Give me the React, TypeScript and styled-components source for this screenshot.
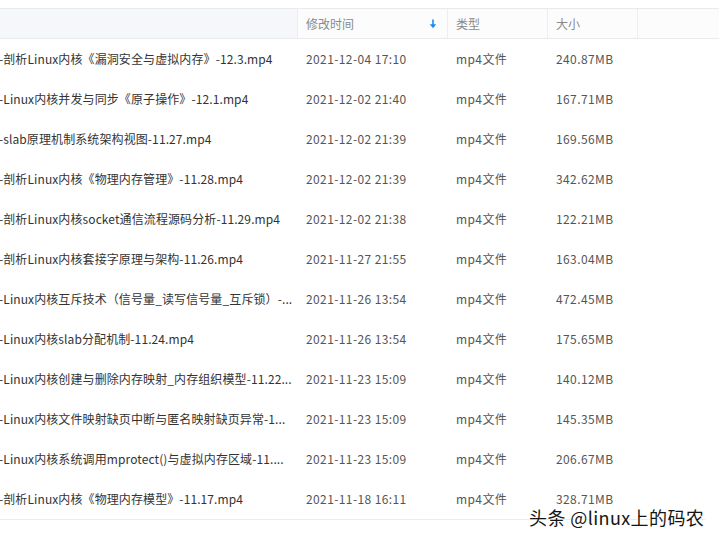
import React from 'react'
import styled, { createGlobalStyle } from 'styled-components'

const GlobalStyle = createGlobalStyle`
    html, body {
        margin: 0;
        padding: 0;
        background: #fff;
    }
    body {
        font-family: "Noto Sans CJK SC", "Noto Sans", sans-serif;
    }
`

interface FileRow {
    name: string
    time: string
    size: string
}

// names are kept as the list shows them (already cut with "...")
const files: FileRow[] = [
    { name: '-剖析Linux内核《漏洞安全与虚拟内存》-12.3.mp4', time: '2021-12-04 17:10', size: '240.87MB' },
    { name: '-Linux内核并发与同步《原子操作》-12.1.mp4', time: '2021-12-02 21:40', size: '167.71MB' },
    { name: '-slab原理机制系统架构视图-11.27.mp4', time: '2021-12-02 21:39', size: '169.56MB' },
    { name: '-剖析Linux内核《物理内存管理》-11.28.mp4', time: '2021-12-02 21:39', size: '342.62MB' },
    { name: '-剖析Linux内核socket通信流程源码分析-11.29.mp4', time: '2021-12-02 21:38', size: '122.21MB' },
    { name: '-剖析Linux内核套接字原理与架构-11.26.mp4', time: '2021-11-27 21:55', size: '163.04MB' },
    { name: '-Linux内核互斥技术（信号量_读写信号量_互斥锁）-...', time: '2021-11-26 13:54', size: '472.45MB' },
    { name: '-Linux内核slab分配机制-11.24.mp4', time: '2021-11-26 13:54', size: '175.65MB' },
    { name: '-Linux内核创建与删除内存映射_内存组织模型-11.22...', time: '2021-11-23 15:09', size: '140.12MB' },
    { name: '-Linux内核文件映射缺页中断与匿名映射缺页异常-1...', time: '2021-11-23 15:09', size: '145.35MB' },
    { name: '-Linux内核系统调用mprotect()与虚拟内存区域-11....', time: '2021-11-23 15:09', size: '206.67MB' },
    { name: '-剖析Linux内核《物理内存模型》-11.17.mp4', time: '2021-11-18 16:11', size: '328.71MB' },
]

export default function App() {
    return (
        <Page>
            <GlobalStyle />
            <Table>
                <HeaderRow>
                    <HeadCell first />
                    <HeadCell>
                        修改时间
                        <SortArrow viewBox="0 0 8 10">
                            <path d="M4 0.5 V8" stroke="#1a8cf0" strokeWidth="1.6" />
                            <path d="M0.8 5.2 L4 9.2 L7.2 5.2 Z" fill="#1a8cf0" />
                        </SortArrow>
                    </HeadCell>
                    <HeadCell>类型</HeadCell>
                    <HeadCell>大小</HeadCell>
                    <HeadCell />
                </HeaderRow>
                {files.map((f) => (
                    <Row key={f.name}>
                        <NameCell>{f.name}</NameCell>
                        <Cell>{f.time}</Cell>
                        <Cell>mp4文件</Cell>
                        <Cell>{f.size}</Cell>
                        <Cell />
                    </Row>
                ))}
            </Table>
            <Watermark>头条 @linux上的码农</Watermark>
        </Page>
    )
}

const Page = styled.div`
    position: relative;
    width: 719px;
    height: 543px;
    padding-top: 8px;
    box-sizing: border-box;
    overflow: hidden;
`

const Table = styled.div`
    width: 705px;
    border-bottom: 1px solid #ececf0;
`

const columns = '297px 150px 100px 90px 1fr'

const HeaderRow = styled.div`
    display: grid;
    grid-template-columns: ${columns};
    height: 29px;
    border-top: 1px solid #e9eaee;
    border-bottom: 1px solid #e9eaee;
    width: 719px;
    background: #fcfcfd;
`

const HeadCell = styled.div<{ first?: boolean }>`
    display: flex;
    align-items: center;
    justify-content: space-between;
    padding: 0 10px 0 8px;
    border-left: ${(p) => (p.first ? 'none' : '1px solid #eceef2')};
    background: ${(p) => (p.first ? '#f6f7fa' : 'transparent')};
    font-size: 12px;
    color: #8a8a8a;
    white-space: nowrap;
`

const SortArrow = styled.svg`
    width: 8px;
    height: 10px;
`

const Row = styled.div`
    display: grid;
    grid-template-columns: ${columns};
    height: 40px;
    align-items: center;
`

const Cell = styled.div`
    padding-left: 9px;
    font-size: 12px;
    line-height: 16px;
    letter-spacing: 0.4px;
    color: #555;
    white-space: nowrap;
`

const NameCell = styled.div`
    margin-left: -1px;
    font-size: 12px;
    line-height: 16px;
    letter-spacing: 0.1px;
    color: #333;
    white-space: nowrap;
`

const Watermark = styled.div`
    position: absolute;
    left: 529px;
    top: 508px;
    font-size: 18px;
    line-height: 18px;
    letter-spacing: 0.4px;
    color: #151515;
    text-shadow: 0 0 2px #fff, 0 0 2px #fff, 0 0 3px #fff;
    white-space: nowrap;
`
